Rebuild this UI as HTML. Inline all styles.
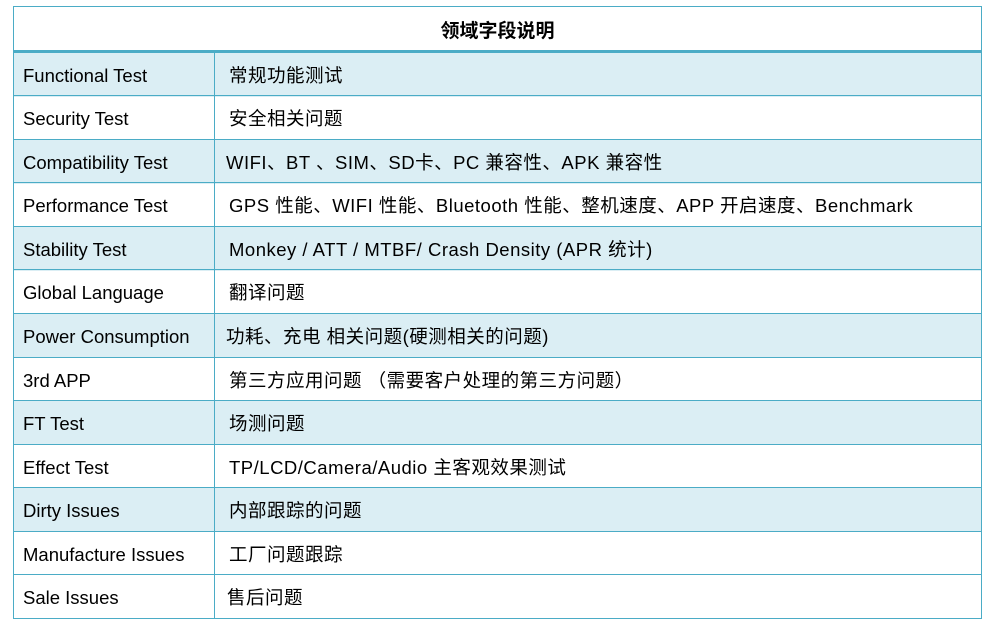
<!DOCTYPE html>
<html><head><meta charset="utf-8"><style>
body{margin:0;background:#fff;width:991px;height:631px;position:relative;overflow:hidden;font-family:"Liberation Sans","Noto Sans CJK SC",sans-serif;color:#000}
.t{position:absolute;left:13px;top:6px;width:967px;height:611px;border:1px solid #4bacc6;box-sizing:content-box}
.h{position:absolute;left:0;top:0;width:967px;height:43px;border-bottom:3px solid #4bacc6;text-align:center;line-height:49px;font-weight:bold;font-size:19px}
.r{position:absolute;left:0;width:967px;height:44px;font-size:18.5px;line-height:45px}
.b{background:#dbeef4}
.r span{position:absolute;top:0;white-space:nowrap}
.a{left:9px}.c{left:215px;letter-spacing:0.5px}
.v{position:absolute;left:200px;top:46px;width:1px;height:565px;background:#4bacc6}
.l{position:absolute;left:0;width:967px;height:1px;background:#4bacc6}
</style></head><body>
<div class="t">
<div class="h">领域字段说明</div>
<div class="r b" style="top:46px"><span class="a">Functional Test</span><span class="c">常规功能测试</span></div>
<div class="r" style="top:89px"><span class="a">Security Test</span><span class="c">安全相关问题</span></div>
<div class="r b" style="top:133px"><span class="a">Compatibility Test</span><span class="c" style="left:212px">WIFI、BT 、SIM、SD卡、PC 兼容性、APK 兼容性</span></div>
<div class="r" style="top:176px"><span class="a">Performance Test</span><span class="c">GPS 性能、WIFI 性能、Bluetooth 性能、整机速度、APP 开启速度、Benchmark</span></div>
<div class="r b" style="top:220px"><span class="a">Stability Test</span><span class="c">Monkey / ATT / MTBF/ Crash Density (APR 统计)</span></div>
<div class="r" style="top:263px"><span class="a">Global Language</span><span class="c">翻译问题</span></div>
<div class="r b" style="top:307px"><span class="a">Power Consumption</span><span class="c" style="left:212px">功耗、充电 相关问题(硬测相关的问题)</span></div>
<div class="r" style="top:351px"><span class="a">3rd APP</span><span class="c">第三方应用问题 （需要客户处理的第三方问题）</span></div>
<div class="r b" style="top:394px"><span class="a">FT Test</span><span class="c">场测问题</span></div>
<div class="r" style="top:438px"><span class="a">Effect Test</span><span class="c">TP/LCD/Camera/Audio 主客观效果测试</span></div>
<div class="r b" style="top:481px"><span class="a">Dirty Issues</span><span class="c">内部跟踪的问题</span></div>
<div class="r" style="top:525px"><span class="a">Manufacture Issues</span><span class="c">工厂问题跟踪</span></div>
<div class="r" style="top:568px;height:43px"><span class="a">Sale Issues</span><span class="c" style="left:213px">售后问题</span></div>
<div class="l" style="top:88px"></div><div class="l" style="top:132px"></div><div class="l" style="top:175px"></div>
<div class="l" style="top:219px"></div><div class="l" style="top:262px"></div><div class="l" style="top:306px"></div>
<div class="l" style="top:350px"></div><div class="l" style="top:393px"></div><div class="l" style="top:437px"></div>
<div class="l" style="top:480px"></div><div class="l" style="top:524px"></div><div class="l" style="top:567px"></div>
<div class="v"></div>
</div>
</body></html>
